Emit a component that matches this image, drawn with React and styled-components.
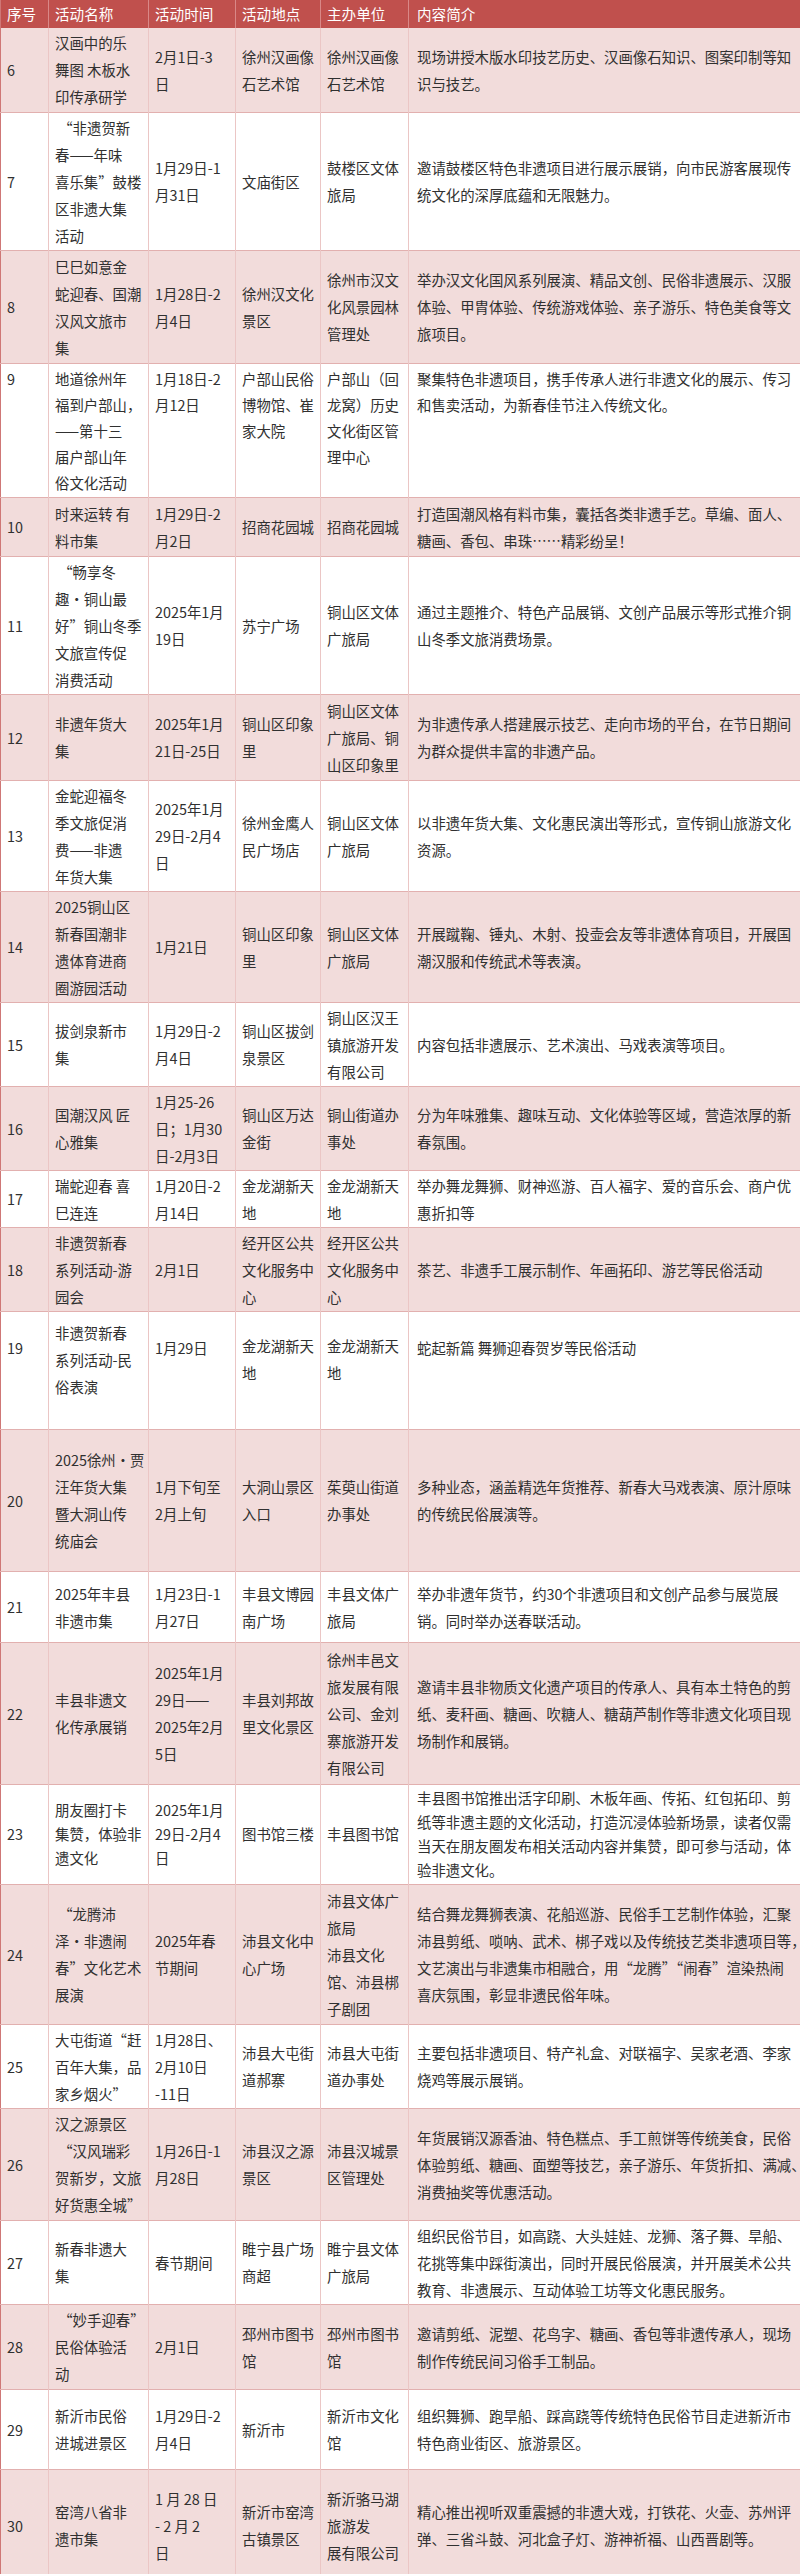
import React from "react";
import styled, { createGlobalStyle } from "styled-components";

const Global = createGlobalStyle`
  html, body { margin: 0; padding: 0; background: #ffffff; }
  body { font-family: "Noto Sans CJK SC", "Noto Sans", sans-serif; }
`;

const Table = styled.table`
  width: 800px;
  border-collapse: collapse;
  table-layout: fixed;
  font-family: "Noto Sans CJK SC", "Noto Sans", sans-serif;
  font-size: 14.4px;
  color: #303030;
  border-left: 1px solid #cf7776;
`;

const Col = styled.col`
  width: ${(p) => p.$w}px;
`;

const HeadRow = styled.tr`
  height: 28px;
  background: #c0504d;
`;

const HeadCell = styled.th`
  color: #ffffff;
  font-weight: 400;
  font-size: 14.6px;
  text-align: left;
  padding: 0 2px 0 ${(p) => (p.$wide ? 8 : 6)}px;
  border-right: 1px solid #d98887;
  white-space: nowrap;
  line-height: 26px;
`;

const Row = styled.tr`
  height: ${(p) => p.$h}px;
  background: ${(p) => (p.$pink ? "#f2dcdb" : "#ffffff")};
  border-bottom: 1px solid #e2b0af;
`;

const Cell = styled.td`
  vertical-align: ${(p) => p.$va};
  padding: ${(p) => p.$pt}px 1px 1px ${(p) => (p.$wide ? 8 : 6)}px;
  border-right: 1px solid #ebc6c5;
  line-height: ${(p) => p.$lh}px;
`;

const Line = styled.span`
  display: block;
  white-space: pre;
`;

const headers = ["序号", "活动名称", "活动时间", "活动地点", "主办单位", "内容简介"];
const widths = [48, 100, 87, 85, 88, 392];

const rows = [
  ["6", "汉画中的乐|舞图 木板水|印传承研学", "2月1日-3|日", "徐州汉画像|石艺术馆", "徐州汉画像|石艺术馆", "现场讲授木版水印技艺历史、汉画像石知识、图案印制等知|识与技艺。", { h: 84 }],
  ["7", " “非遗贺新|春——年味|喜乐集”鼓楼|区非遗大集|活动", "1月29日-1|月31日", "文庙街区", "鼓楼区文体|旅局", "邀请鼓楼区特色非遗项目进行展示展销，向市民游客展现传|统文化的深厚底蕴和无限魅力。", { h: 138 }],
  ["8", "巳巳如意金|蛇迎春、国潮|汉风文旅市|集", "1月28日-2|月4日", "徐州汉文化|景区", "徐州市汉文|化风景园林|管理处", "举办汉文化国风系列展演、精品文创、民俗非遗展示、汉服|体验、甲胄体验、传统游戏体验、亲子游乐、特色美食等文|旅项目。", { h: 113 }],
  ["9", "地道徐州年|福到户部山，|——第十三|届户部山年|俗文化活动", "1月18日-2|月12日", "户部山民俗|博物馆、崔|家大院", "户部山（回|龙窝）历史|文化街区管|理中心", "聚集特色非遗项目，携手传承人进行非遗文化的展示、传习|和售卖活动，为新春佳节注入传统文化。", { h: 132, va: "top", lh: 26, pt: 2 }],
  ["10", "时来运转 有|料市集", "1月29日-2|月2日", "招商花园城", "招商花园城", "打造国潮风格有料市集，囊括各类非遗手艺。草编、面人、|糖画、香包、串珠……精彩纷呈！", { h: 59 }],
  ["11", " “畅享冬|趣·铜山最|好”铜山冬季|文旅宣传促|消费活动", "2025年1月|19日", "苏宁广场", "铜山区文体|广旅局", "通过主题推介、特色产品展销、文创产品展示等形式推介铜|山冬季文旅消费场景。", { h: 138 }],
  ["12", "非遗年货大|集", "2025年1月|21日-25日", "铜山区印象|里", "铜山区文体|广旅局、铜|山区印象里", "为非遗传承人搭建展示技艺、走向市场的平台，在节日期间|为群众提供丰富的非遗产品。", { h: 86 }],
  ["13", "金蛇迎福冬|季文旅促消|费——非遗|年货大集", "2025年1月|29日-2月4|日", "徐州金鹰人|民广场店", "铜山区文体|广旅局", "以非遗年货大集、文化惠民演出等形式，宣传铜山旅游文化|资源。", { h: 110 }],
  ["14", "2025铜山区|新春国潮非|遗体育进商|圈游园活动", "1月21日", "铜山区印象|里", "铜山区文体|广旅局", "开展蹴鞠、锤丸、木射、投壶会友等非遗体育项目，开展国|潮汉服和传统武术等表演。", { h: 110 }],
  ["15", "拔剑泉新市|集", "1月29日-2|月4日", "铜山区拔剑|泉景区", "铜山区汉王|镇旅游开发|有限公司", "内容包括非遗展示、艺术演出、马戏表演等项目。", { h: 84 }],
  ["16", "国潮汉风 匠|心雅集", "1月25-26|日；1月30|日-2月3日", "铜山区万达|金街", "铜山街道办|事处", "分为年味雅集、趣味互动、文化体验等区域，营造浓厚的新|春氛围。", { h: 82 }],
  ["17", "瑞蛇迎春 喜|巳连连", "1月20日-2|月14日", "金龙湖新天|地", "金龙湖新天|地", "举办舞龙舞狮、财神巡游、百人福字、爱的音乐会、商户优|惠折扣等", { h: 56 }],
  ["18", "非遗贺新春|系列活动-游|园会", "2月1日", "经开区公共|文化服务中|心", "经开区公共|文化服务中|心", "茶艺、非遗手工展示制作、年画拓印、游艺等民俗活动", { h: 84 }],
  ["19", "非遗贺新春|系列活动-民|俗表演", "1月29日", "金龙湖新天|地", "金龙湖新天|地", "蛇起新篇 舞狮迎春贺岁等民俗活动", { h: 118, va: "top", pt: 7, cpt: { 0: 22, 2: 22, 3: 20, 4: 20, 5: 22 } }],
  ["20", "2025徐州·贾|汪年货大集|暨大洞山传|统庙会", "1月下旬至|2月上旬", "大洞山景区|入口", "茱萸山街道|办事处", "多种业态，涵盖精选年货推荐、新春大马戏表演、原汁原味|的传统民俗展演等。", { h: 142 }],
  ["21", "2025年丰县|非遗市集", "1月23日-1|月27日", "丰县文博园|南广场", "丰县文体广|旅局", "举办非遗年货节，约30个非遗项目和文创产品参与展览展|销。同时举办送春联活动。", { h: 71 }],
  ["22", "丰县非遗文|化传承展销", "2025年1月|29日——|2025年2月|5日", "丰县刘邦故|里文化景区", "徐州丰邑文|旅发展有限|公司、金刘|寨旅游开发|有限公司", "邀请丰县非物质文化遗产项目的传承人、具有本土特色的剪|纸、麦秆画、糖画、吹糖人、糖葫芦制作等非遗文化项目现|场制作和展销。", { h: 142 }],
  ["23", "朋友圈打卡|集赞，体验非|遗文化", "2025年1月|29日-2月4|日", "图书馆三楼", "丰县图书馆", "丰县图书馆推出活字印刷、木板年画、传拓、红包拓印、剪|纸等非遗主题的文化活动，打造沉浸体验新场景，读者仅需|当天在朋友圈发布相关活动内容并集赞，即可参与活动，体|验非遗文化。", { h: 100, lh: 24 }],
  ["24", " “龙腾沛|泽·非遗闹|春”文化艺术|展演", "2025年春|节期间", "沛县文化中|心广场", "沛县文体广|旅局|沛县文化|馆、沛县梆|子剧团", "结合舞龙舞狮表演、花船巡游、民俗手工艺制作体验，汇聚|沛县剪纸、唢呐、武术、梆子戏以及传统技艺类非遗项目等，|文艺演出与非遗集市相融合，用“龙腾”“闹春”渲染热闹|喜庆氛围，彰显非遗民俗年味。", { h: 140 }],
  ["25", "大屯街道“赶|百年大集，品|家乡烟火”", "1月28日、|2月10日|-11日", "沛县大屯街|道郝寨", "沛县大屯街|道办事处", "主要包括非遗项目、特产礼盒、对联福字、吴家老酒、李家|烧鸡等展示展销。", { h: 84 }],
  ["26", "汉之源景区| “汉风瑞彩|贺新岁，文旅|好货惠全城”", "1月26日-1|月28日", "沛县汉之源|景区", "沛县汉城景|区管理处", "年货展销汉源香油、特色糕点、手工煎饼等传统美食，民俗|体验剪纸、糖画、面塑等技艺，亲子游乐、年货折扣、满减、|消费抽奖等优惠活动。", { h: 112 }],
  ["27", "新春非遗大|集", "春节期间", "睢宁县广场|商超", "睢宁县文体|广旅局", "组织民俗节目，如高跷、大头娃娃、龙狮、落子舞、旱船、|花挑等集中踩街演出，同时开展民俗展演，并开展美术公共|教育、非遗展示、互动体验工坊等文化惠民服务。", { h: 84 }],
  ["28", " “妙手迎春”|民俗体验活|动", "2月1日", "邳州市图书|馆", "邳州市图书|馆", "邀请剪纸、泥塑、花鸟字、糖画、香包等非遗传承人，现场|制作传统民间习俗手工制品。", { h: 85 }],
  ["29", "新沂市民俗|进城进景区", "1月29日-2|月4日", "新沂市", "新沂市文化|馆", "组织舞狮、跑旱船、踩高跷等传统特色民俗节目走进新沂市|特色商业街区、旅游景区。", { h: 80 }],
  ["30", "窑湾八省非|遗市集", "1 月 28 日|- 2 月 2|日", "新沂市窑湾|古镇景区", "新沂骆马湖|旅游发|展有限公司", "精心推出视听双重震撼的非遗大戏，打铁花、火壶、苏州评|弹、三省斗鼓、河北盒子灯、游神祈福、山西晋剧等。", { h: 112 }],
];

function Lines({ text }) {
  return text.split("|").map((l, i) => <Line key={i}>{l}</Line>);
}

export default function App() {
  return (
    <>
      <Global />
      <Table>
        <colgroup>
          {widths.map((w, i) => (
            <Col key={i} $w={w} />
          ))}
        </colgroup>
        <thead>
          <HeadRow>
            {headers.map((h, i) => (
              <HeadCell key={h} $wide={i === 5}>
                {h}
              </HeadCell>
            ))}
          </HeadRow>
        </thead>
        <tbody>
          {rows.map((r, ri) => {
            const opt = r[6];
            const cells = r.slice(0, 6);
            return (
              <Row key={r[0]} $h={opt.h} $pink={ri % 2 === 0}>
                {cells.map((c, ci) => (
                  <Cell
                    key={ci}
                    $wide={ci === 5}
                    $va={opt.va || "middle"}
                    $lh={opt.lh || 27}
                    $pt={(opt.cpt && opt.cpt[ci] != null ? opt.cpt[ci] : opt.pt) ?? 1}
                  >
                    <Lines text={c} />
                  </Cell>
                ))}
              </Row>
            );
          })}
        </tbody>
      </Table>
    </>
  );
}
